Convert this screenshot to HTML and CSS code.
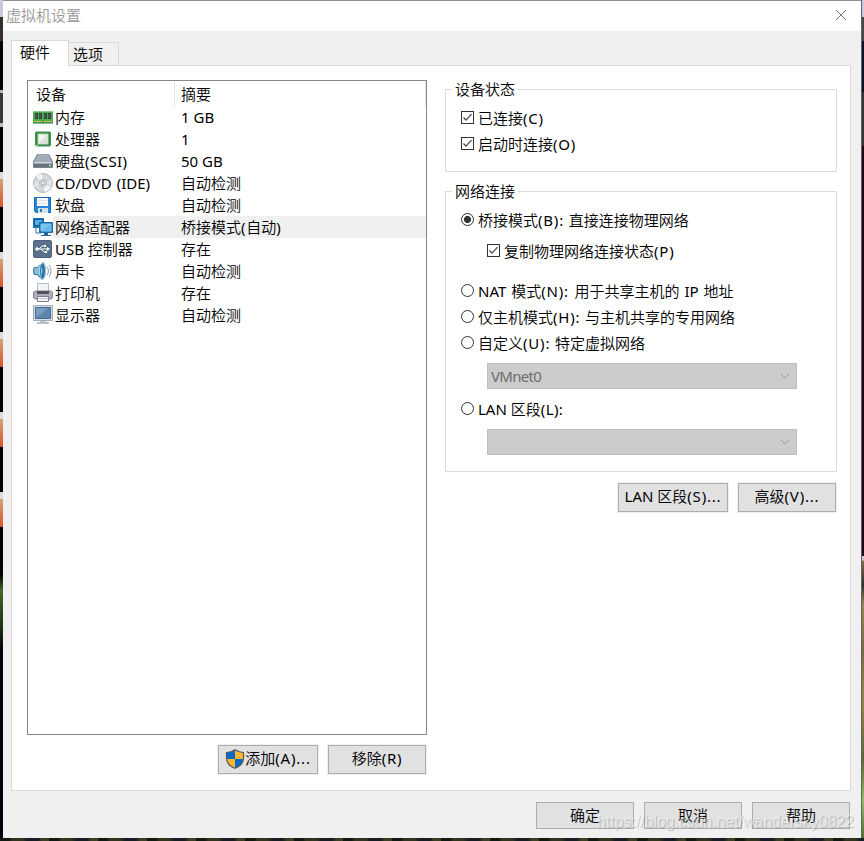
FILE: index.html
```
<!DOCTYPE html>
<html lang="zh-CN">
<head>
<meta charset="utf-8">
<title>虚拟机设置</title>
<link rel="stylesheet" href="styles.css">
</head>
<body>
<div class="desktop">
<div class="edge edge-left"></div>
<main class="window">
  <header class="titlebar"><span>虚拟机设置</span>
    <svg class="close" width="12" height="12" viewBox="0 0 12 12"><path d="M1 1l10 10M11 1L1 11" stroke="#777" stroke-width="1"/></svg>
  </header>
  <nav class="tabs"><div class="tab active">硬件</div><div class="tab">选项</div></nav>
  <section class="panel">
    <div class="left">
      <div class="list">
        <div class="list-head"><span class="c1">设备</span><span class="c2">摘要</span></div>
        <div class="row"><svg class="ico" width="20" height="20" viewBox="0 0 20 20"><path d="M0 4h20v12H0z" fill="#4daa50"/><path d="M0 4h20v1H0z" fill="#8acb88"/><path d="M2 6h3v6H2zM6 6h3v6H6zM11 6h3v6h-3zM15 6h3v6h-3z" fill="#34413b"/><path d="M3 7v4M7 7v4M12 7v4M16 7v4" stroke="#56645c"/><path d="M1 14.5h8m2 0h8" stroke="#e5bd4d" stroke-width="1"/><path d="M0 16h20" stroke="#207c30"/></svg><span class="name">内存</span><span>1 GB</span></div>
        <div class="row"><svg class="ico" width="20" height="20" viewBox="0 0 20 20"><rect x="2.5" y="3" width="15" height="14" rx="1" fill="#2c8945" stroke="#3c9555"/><rect x="5" y="5" width="10" height="10" fill="#f1f5ee" stroke="#b6d4ac"/><path d="M6 14l8-8v8z" fill="#dce1dc"/><path d="M3 16h2v1H3z" fill="#e4cf57"/></svg><span class="name">处理器</span><span>1</span></div>
        <div class="row"><svg class="ico" width="20" height="20" viewBox="0 0 20 20"><path d="M5 3h10q1 0 1.500 1L20 11v5q0 1-1 1H1q-1 0-1-1v-5l3.500-7Q4 3 5 3z" fill="#77838e"/><path d="M5 3.500h10L19 12H1z" fill="#bec7ce"/><path d="M5 4h10l3 7H2z" fill="#a3adb7"/><path d="M1 12h18v4H1z" fill="#66737e"/><path d="M1 12h18" stroke="#dce2e6"/><path d="M16 14.500h2" stroke="#a7ed8a" stroke-width="1.5"/></svg><span class="name">硬盘<span class="key tight">(SCSI)</span></span><span>50 GB</span></div>
        <div class="row"><svg class="ico" width="20" height="20" viewBox="0 0 20 20"><circle cx="10" cy="10" r="9.5" fill="#d4d8dc" stroke="#aeb4ba"/><path d="M10 10L3 3A10 10 0 0 1 9 1zM10 10l8 4a9 9 0 0 1-6 5z" fill="#f4f5f6"/><path d="M10 10l9-3v5zM10 10L1 14V9z" fill="#e1e4e6"/><circle cx="10" cy="10" r="3.500" fill="#d9dde0" stroke="#b2b8bd"/><circle cx="10" cy="10" r="1.6" fill="#fff" stroke="#aab0b5"/></svg><span class="name wide">CD/DVD (IDE)</span><span>自动检测</span></div>
        <div class="row"><svg class="ico" width="20" height="20" viewBox="0 0 20 20"><path d="M1 2h17v16H3l-2-2z" fill="#2587db"/><path d="M1.500 2.500h16v15h-14l-2-2z" fill="none" stroke="#1c6aad"/><path d="M4 3h11v8H4z" fill="#f7f8fa"/><path d="M5 5.500h9M5 8.500h9" stroke="#dce1e6"/><path d="M5 13h10v5H5z" fill="#d9e0e8"/><path d="M7 14h2v3H7z" fill="#237ac0"/></svg><span class="name">软盘</span><span>自动检测</span></div>
        <div class="row selected"><svg class="ico" width="20" height="20" viewBox="0 0 20 20"><path d="M0 1h11v10H0z" fill="#1778b9"/><path d="M1.500 2.500h8v6h-8z" fill="#55b2e5" stroke="#1a5488"/><path d="M3 11v5h5" fill="none" stroke="#3b779e"/><rect x="6" y="5" width="14" height="11" rx="1" fill="#166eae"/><path d="M8 7h10v7H8z" fill="#60b5e9" stroke="#8acbef"/><path d="M8 14l10-7H8z" fill="#83c5eb"/><path d="M11 16h4v2h3v1H8v-1h3z" fill="#286591"/></svg><span class="name">网络适配器</span><span>桥接模式<span class="key">(</span>自动<span class="key">)</span></span></div>
        <div class="row"><svg class="ico" width="20" height="20" viewBox="0 0 20 20"><rect x=".5" y="1.500" width="18" height="17" rx="1.500" fill="#59718a" stroke="#4c647b"/><path d="M4 10h11M6 10l3-3h2M8 10l3 3h2" fill="none" stroke="#fff"/><circle cx="4" cy="10" r="1.700" fill="#fff"/><path d="M14 8l3 2-3 2zM11 6h2v2h-2zM12 12h2v2h-2z" fill="#fff"/></svg><span class="name">USB 控制器</span><span>存在</span></div>
        <div class="row"><svg class="ico" width="20" height="20" viewBox="0 0 20 20"><path d="M1 6h3l6-5q3 2 3 9t-4 9l-5-5H1Q-1 10 1 6z" fill="#397eac"/><path d="M2 7h2l5-5q-3 7-1 14l-4-3H2Q0 10 2 7z" fill="#88bdd7"/><ellipse cx="9.500" cy="10" rx="3" ry="8" fill="#2874aa" stroke="#b2d8e8"/><path d="M8 6q3 4 0 8z" fill="#98cbe2"/><path d="M14 6q3 4 0 8M16 4q4 6 0 12" fill="none" stroke="#9cb1bf" stroke-width="1.200"/></svg><span class="name">声卡</span><span>自动检测</span></div>
        <div class="row"><svg class="ico" width="20" height="20" viewBox="0 0 20 20"><path d="M4.500 .5h11V9h-11z" fill="#f0f3f7" stroke="#b5bcc5"/><rect x=".5" y="8" width="19" height="8" rx="2" fill="#afadbd" stroke="#8a8596"/><path d="M4 8h12v3H4z" fill="#56505f"/><path d="M4.500 13.500h11v5h-11z" fill="#f4f4f6" stroke="#837c8c"/><path d="M5 15.500h10" stroke="#cbc8d0"/></svg><span class="name">打印机</span><span>存在</span></div>
        <div class="row"><svg class="ico" width="20" height="20" viewBox="0 0 20 20"><path d="M.5 .5h19v15H.5z" fill="#d5dce1" stroke="#a3aeb8"/><path d="M2.500 2.500h15v11h-15z" fill="#5e84aa" stroke="#456c91"/><path d="M3 13L15 3H3z" fill="#7a9cbe"/><path d="M7 16h6v1h3v2H4v-2h3z" fill="#b7c2cb"/></svg><span class="name">显示器</span><span>自动检测</span></div>
      </div>
      <div class="list-actions"><button class="btn add"><svg width="20" height="20" viewBox="0 0 20 20"><path d="M10 .8Q14 3.500 18.500 3.500V9q0 7-8.500 10.300Q1.500 16 1.500 9V3.500Q6 3.500 10 .8z" fill="#0869c7"/><path d="M10 1q4 2.500 8.500 2.500V10H10zM1.500 10H10v9.300Q2 16 1.500 10z" fill="#fdb72b"/><path d="M10 .8Q14 3.500 18.500 3.500V9q0 7-8.500 10.300Q1.500 16 1.500 9V3.500Q6 3.500 10 .8z" fill="none" stroke="#595b5d" stroke-width="1.200"/></svg><span>添加<span class="key">(A)...</span></span></button><button class="btn remove"><span>移除<span class="key">(R)</span></span></button></div>
    </div>
    <div class="right">
      <section class="group status"><h2>设备状态</h2>
        <div class="option"><i class="check"><svg width="13" height="13"><path d="M2.500 6.500l2.500 2.700 5.500-6" fill="none" stroke="#444" stroke-width="1.200"/></svg></i><span>已连接<span class="key">(C)</span></span></div>
        <div class="option"><i class="check"><svg width="13" height="13"><path d="M2.500 6.500l2.500 2.700 5.500-6" fill="none" stroke="#444" stroke-width="1.200"/></svg></i><span>启动时连接<span class="key">(O)</span></span></div>
      </section>
      <section class="group network"><h2>网络连接</h2>
        <div class="option"><i class="radio on"></i><span>桥接模式<span class="key">(B): </span>直接连接物理网络</span></div>
        <div class="option sub"><i class="check"><svg width="13" height="13"><path d="M2.500 6.500l2.500 2.700 5.500-6" fill="none" stroke="#444" stroke-width="1.200"/></svg></i><span>复制物理网络连接状态<span class="key">(P)</span></span></div>
        <div class="option nat"><i class="radio"></i><span class="wide">NAT 模式<span class="key">(N): </span>用于共享主机的 IP 地址</span></div>
        <div class="option"><i class="radio"></i><span>仅主机模式<span class="key">(H): </span>与主机共享的专用网络</span></div>
        <div class="option"><i class="radio"></i><span>自定义<span class="key">(U): </span>特定虚拟网络</span></div>
        <div class="select"><span class="value">VMnet0</span><svg width="10" height="6"><path d="M1 1l4 4 4-4" fill="none" stroke="#999"/></svg></div>
        <div class="option lan"><i class="radio"></i><span>LAN 区段<span class="key tight">(L):</span></span></div>
        <div class="select"><span></span><svg width="10" height="6"><path d="M1 1l4 4 4-4" fill="none" stroke="#999"/></svg></div>
      </section>
      <div class="net-actions"><button class="btn lan-btn"><span>LAN 区段<span class="key">(S)...</span></span></button><button class="btn"><span>高级<span class="key">(V)...</span></span></button></div>
    </div>
  </section>
  <footer><button>确定</button><button>取消</button><button>帮助</button></footer>
</main>
<div class="edge edge-right"></div>
<div class="edge-bottom"></div>
<div class="watermark">https://blog.csdn.net/wandersky0822</div>
</div>
</body>
</html>
```
FILE: styles.css
```
* { box-sizing: border-box; }
body { margin: 0; overflow: hidden; font: 15px/22px "Noto Sans", "Noto Sans CJK SC DemiLight", "Noto Sans CJK SC Light", "Noto Sans CJK SC", sans-serif; color: #000; }
.desktop { position: relative; width: 864px; height: 841px; display: grid; grid-template-columns: 3px 858px 3px; grid-template-rows: 838px 3px; }
.edge-left { background:
  linear-gradient(#c6cbdf 0 17px, #38302c 17px 41px, #020203 41px 90px, #b6b6b6 90px 93px, #34373c 93px 123px, #bbb 123px 127px, #020203 127px 172px, #ddd 172px 179px, #d5a472 179px, #d3572a 207px, #020203 207px 252px, #ddd 252px 259px, #d5a472 259px, #d3572a 287px, #020203 287px 332px, #ddd 332px 339px, #d5a472 339px, #d3572a 367px, #020203 367px 412px, #ddd 412px 419px, #d5a472 419px, #d3572a 447px, #020203 447px 492px, #ddd 492px 499px, #d5a472 499px, #d3572a 527px, #020203 527px 575px, #426528 590px, #1a2c12 630px, #02030a 650px 100%); }
.edge-right { border-left: 1px solid #66606c; background: linear-gradient(#c7cce5 0 17px, #484740 17px 41px, #051322 41px 92px, #33352f 92px 146px, #240019 146px 556px, #ccc 556px 560px, #8d6745 561px, #293326 585px, #a18352 605px, #756c3b 650px, #9c8347 700px, #596932 760px, #94bd65 800px, #51712e 838px); }
.edge-bottom { grid-column: 1 / 4; background: repeating-linear-gradient(90deg, #101912 0 9px, #30341f 12px 23px, #161e24 27px 38px, #3c3f24 42px 49px); }
.window { display: flex; flex-direction: column; background: #f0f0f0; min-width: 0; }
.titlebar { height: 31px; padding: 1px 14px 0 3px; border-top: 1px solid #8c8e9c; background: #fff; color: #999; display: flex; justify-content: space-between; line-height: 27px; }
.close { margin-top: 7px; }
.tabs { height: 35px; padding: 9px 0 0 8px; display: flex; align-items: flex-end; position: relative; z-index: 1; }
.tab { width: 50px; height: 23px; margin-bottom: 1px; border: 1px solid #d9d9d9; border-left: 0; border-bottom: 0; padding-left: 4px; line-height: 23px; }
.tab.active { width: 58px; height: 26px; margin: 0; border-left: 1px solid #d9d9d9; background: #fff; padding-left: 8px; line-height: 22px; }
.panel { width: 840px; height: 726px; margin: -1px 0 0 8px; border: 1px solid #d9d9d9; background: #fff; padding: 14px 0 0 15px; display: flex; gap: 18px; }
.left { width: 400px; }
.list { height: 655px; border: 1px solid #828790; }
.list-head { height: 25px; display: flex; line-height: 24px; padding-top: 1px; border-right: 1px solid #e5e5e5; }
.c1 { width: 147px; padding-left: 8px; border-right: 1px solid #e5e5e5; }
.c2 { padding-left: 6px; }
.row { height: 22px; display: flex; line-height: 22px; padding-left: 5px; white-space: nowrap; }
.ico { flex: none; margin-top: 1px; }
.name { width: 128px; padding-left: 2px; }
.key { letter-spacing: .8px; }
.key.tight { letter-spacing: .4px; }
.wide { word-spacing: 1px; }
.selected { background: linear-gradient(90deg, #fff 25px, #f0f0f0 25px); }
.list-actions { margin-top: 9px; display: flex; justify-content: flex-end; padding: 1px 1px 0 0; gap: 10px; }
button { font: inherit; line-height: 23px; color: #000; margin: 0; padding: 0 0 1px; border: 1px solid #adadad; background: #e1e1e1; white-space: nowrap; width: 98px; height: 27px; }
.btn { height: 29px; width: 98px; padding: 0 0 2px; box-shadow: 0 0 0 1px #f0f0f0; display: flex; align-items: center; justify-content: center; }
.add { width: 100px; }
.right { width: 392px; padding-top: 9px; }
.group { border: 1px solid #dcdcdc; padding: 0 15px; }
h2 { font: inherit; height: 22px; line-height: 22px; margin: -12px 0 0 -9px; padding: 0 3px; width: 66px; background: #fff; white-space: nowrap; }
.status { height: 83px; }
.network { height: 281px; margin-top: 19px; }
.option { height: 26px; display: flex; align-items: center; gap: 4px; white-space: nowrap; }
.status .option:nth-of-type(1) { margin-top: 5px; }
.network h2 + .option { margin-top: 5px; }
.option i { width: 13px; height: 13px; flex: none; margin-top: -2px; background: #fff; border: 1px solid #333; }
.check svg { display: block; margin: -1px; }
.option .radio { border-radius: 50%; }
.option .on { background: radial-gradient(circle, #333 0 3.2px, #fff 3.800px); }
.sub { margin: 5px 0 0 26px; }
.nat { margin-top: 14px; }
.select { width: 310px; height: 26px; margin: 7px 0 0 26px; padding: 0 6px 0 3px; border: 1px solid #bfbfbf; background: #ccc; color: #6d6d6d; display: flex; justify-content: space-between; align-items: center; }
.value { letter-spacing: -.7px; }
.lan { margin-top: 7px; }
.net-actions { display: flex; gap: 10px; justify-content: flex-end; padding: 11px 1px 0 0; }
.lan-btn { width: 110px; }
footer { display: flex; gap: 10px; justify-content: flex-end; padding: 11px 11px 0 0; }
.watermark { position: absolute; left: 597px; top: 812px; font: 16px/20px "Liberation Sans", sans-serif; letter-spacing: -.08px; color: #ffffff80; text-shadow: 1px 1px 1px #0003; white-space: nowrap; }
```
